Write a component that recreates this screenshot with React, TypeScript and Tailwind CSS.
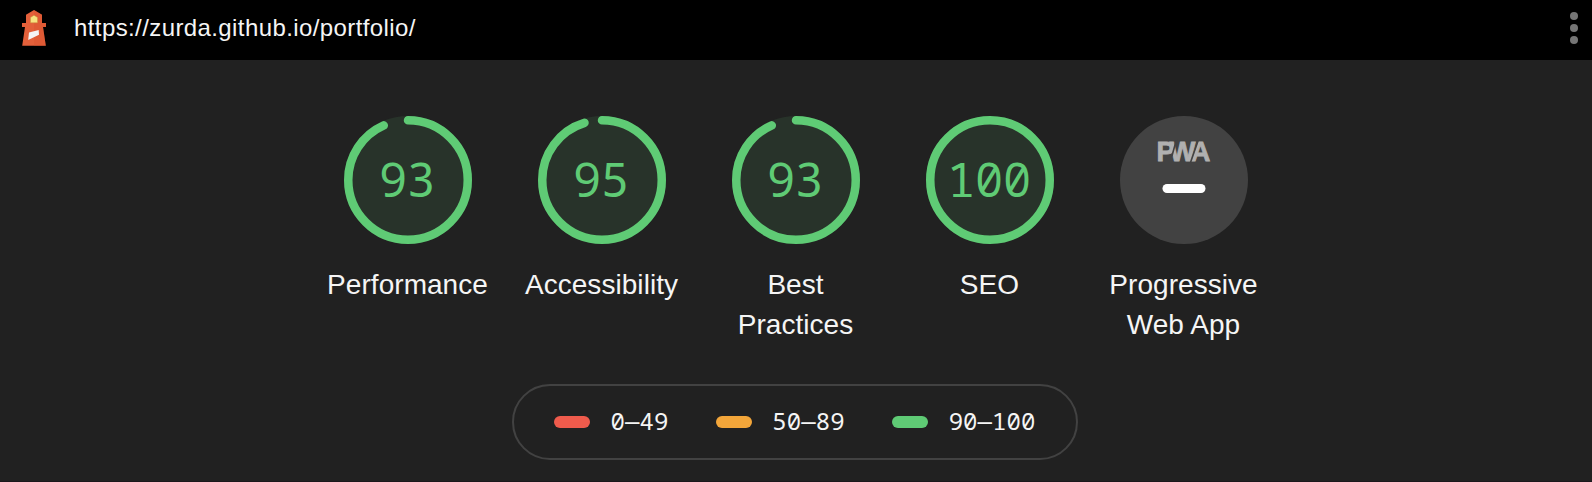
import React from "react";

type Score = { value: number; arc: number; label: string };

const scores: Score[] = [
  { value: 93, arc: 0.932, label: "Performance" },
  { value: 95, arc: 0.951, label: "Accessibility" },
  { value: 93, arc: 0.932, label: "Best Practices" },
  { value: 100, arc: 1, label: "SEO" },
];

const ranges = [
  { from: 0, to: 49, color: "bg-[#ef5b4c]" },
  { from: 50, to: 89, color: "bg-[#f3a63a]" },
  { from: 90, to: 100, color: "bg-[#5fcb75]" },
];

const CIRC = 2 * Math.PI * 59.75;

function Lighthouse() {
  return (
    <svg width="36" height="36" viewBox="16 10 36 36" className="mb-1 shrink-0">
      <path fill="#e3603a" d="M34 10l8 4.700V23h4v4h-3l2.800 18.800H22.200L25 27h-3v-4h4v-8.300z" />
      <path fill="#d9532f" opacity=".4" d="M34 10l8 4.700V23h4v4h-3l2.800 18.800H34z" />
      <path fill="#f6e27f" stroke="#c9903c" strokeWidth=".5" d="M34 15.200l3.500 2.300v5.300h-7v-5.300z" />
      <path fill="#f4f4f4" d="M29 32.500l9.700-2.500.300 4.800-10.800 5.100z" />
    </svg>
  );
}

function Gauge({ value, arc }: { value: number; arc: number }) {
  return (
    <div className="grid size-32 place-items-center text-[#5fcb75]">
      <svg width="128" height="128" viewBox="0 0 128 128" className="col-start-1 row-start-1">
        <circle cx="64" cy="64" r="64" fill="#28332a" />
        <circle
          cx="64"
          cy="64"
          r="59.750"
          fill="none"
          stroke="currentColor"
          strokeWidth="8.500"
          strokeLinecap="round"
          strokeDasharray={`${arc * CIRC} ${CIRC}`}
          transform="rotate(-90 64 64)"
        />
      </svg>
      <span className="col-start-1 row-start-1 pr-0.5 pb-0.5 font-['Noto_Sans_Mono',monospace] text-[47px] leading-none font-[450] tracking-[-0.200px]">
        {value}
      </span>
    </div>
  );
}

function PwaBadge() {
  return (
    <svg width="128" height="128" viewBox="0 0 128 128">
      <circle cx="64" cy="64" r="64" fill="#424242" />
      <text
        x="36.500 49.500 70.500"
        y="45"
        fill="#b0b0b0"
        stroke="#b0b0b0"
        strokeWidth=".8"
        fontFamily="Liberation Sans, sans-serif"
        fontWeight="700"
        fontSize="27.500"
      >
        PWA
      </text>
      <path d="M51.800 40.500l4.700-17M70.500 46.500l8-23" stroke="#424242" strokeWidth="1.600" />
      <rect x="42.500" y="68" width="43" height="9" rx="4.500" fill="#fff" />
    </svg>
  );
}

function Column({ label, children }: { label: string; children: React.ReactNode }) {
  return (
    <div className="flex w-[194px] flex-col items-center">
      {children}
      <div className="mt-[21px] w-[164px] pr-px text-center text-[28px] leading-10 tracking-[0.050px]">
        {label}
      </div>
    </div>
  );
}

export default function App() {
  return (
    <div className="flex h-[482px] w-[1592px] flex-col border-b border-[#1b181c] bg-[#212121] font-['Liberation_Sans',Arial,sans-serif] text-[#f5f5f5]">
      <header className="flex h-[60px] shrink-0 items-center bg-black pl-4">
        <Lighthouse />
        <span className="ml-[22px] pb-1 text-[24px] leading-none tracking-[0.400px]">
          https://zurda.github.io/portfolio/
        </span>
        <div className="mr-[14px] ml-auto flex flex-col gap-1 pb-1">
          <span className="size-2 rounded-full bg-[#757575]" />
          <span className="size-2 rounded-full bg-[#757575]" />
          <span className="size-2 rounded-full bg-[#757575]" />
        </div>
      </header>
      <main className="flex flex-col items-center pt-14">
        <div className="flex h-[268px]">
          {scores.map((s) => (
            <Column key={s.label} label={s.label}>
              <Gauge value={s.value} arc={s.arc} />
            </Column>
          ))}
          <Column label="Progressive Web App">
            <PwaBadge />
          </Column>
        </div>
        <div className="mr-0.5 flex h-[76px] w-[566px] items-center gap-[47.500px] rounded-full border-2 border-[#424242] px-10">
          {ranges.map((r) => (
            <div key={r.from} className="flex items-center gap-[20.500px]">
              <span className={`h-3 w-9 rounded-full ${r.color}`} />
              <span className="pb-0.5 font-['Noto_Sans_Mono',monospace] text-[24px] leading-6 tracking-[0.050px] whitespace-nowrap">
                {r.from}
                <span className="font-['DejaVu_Sans_Mono',monospace] leading-none">–</span>
                {r.to}
              </span>
            </div>
          ))}
        </div>
      </main>
    </div>
  );
}
